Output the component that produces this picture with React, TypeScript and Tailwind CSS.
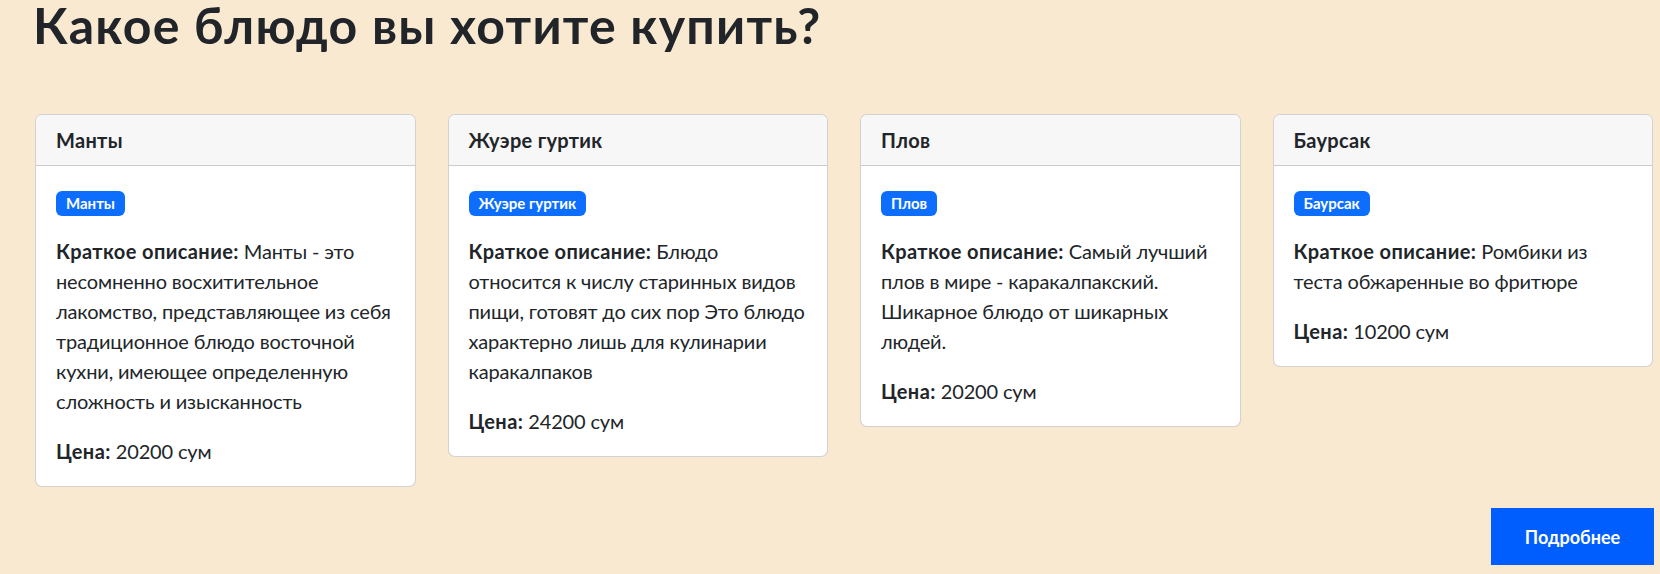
const dishes = [
    {
        id: 1,
        name: 'Манты',
        description:
            'Манты - это несомненно восхитительное лакомство, представляющее из себя традиционное блюдо восточной кухни, имеющее определенную сложность и изысканность',
        price: 20200,
    },
    {
        id: 2,
        name: 'Жуэре гуртик',
        description:
            'Блюдо относится к числу старинных видов пищи, готовят до сих пор Это блюдо характерно лишь для кулинарии каракалпаков',
        price: 24200,
    },
    {
        id: 3,
        name: 'Плов',
        description: 'Самый лучший плов в мире - каракалпакский. Шикарное блюдо от шикарных людей.',
        price: 20200,
    },
    {
        id: 4,
        name: 'Баурсак',
        description: 'Ромбики из теста обжаренные во фритюре',
        price: 10200,
    },
];

function DishCard({ name, description, price }: { name: string; description: string; price: number }) {
    return (
        <div className="bg-white border border-[rgba(0,0,0,0.175)] rounded-[7px] overflow-hidden">
            <div className="px-5 py-[10px] bg-[#f7f7f7] border-b border-[rgba(0,0,0,0.175)] font-bold leading-[30px] tracking-[0.3px]">
                {name}
            </div>
            <div className="p-5">
                <div className="pt-[5px] mb-5 flex">
                    <span className="h-[25px] px-[10px] flex items-center bg-[#0d6efd] text-white text-[15px] font-bold leading-none rounded-[6px]">
                        {name}
                    </span>
                </div>
                {/* подписи чуть шире, как в оригинальном шрифте */}
                <p className="mb-5 tracking-[-0.15px]">
                    <b className="tracking-[0.4px]">Краткое описание:</b> {description}
                </p>
                <p className="tracking-[-0.15px]">
                    <b className="tracking-[0.4px]">Цена:</b> {price} сум
                </p>
            </div>
        </div>
    );
}

export default function App() {
    return (
        <div
            className="min-h-screen bg-[#f8e9d0] text-[#212529] text-[20px] leading-[30px]"
            style={{ fontFamily: 'Lato, "Noto Sans", sans-serif' }}
        >
            <h1 className="pl-[33px] text-[50px] leading-[51px] font-bold tracking-[1.25px]">
                Какое блюдо вы хотите купить?
            </h1>

            <div className="mt-[63px] pl-[35px] pr-[7px] grid grid-cols-4 gap-8 items-start">
                {dishes.map((dish) => (
                    <DishCard key={dish.id} name={dish.name} description={dish.description} price={dish.price} />
                ))}
            </div>

            <div className="mt-[21px] pr-[6px] flex justify-end">
                <button className="w-[163px] h-[57px] bg-[#005efe] text-white text-[18px] font-bold">
                    Подробнее
                </button>
            </div>
        </div>
    );
}
